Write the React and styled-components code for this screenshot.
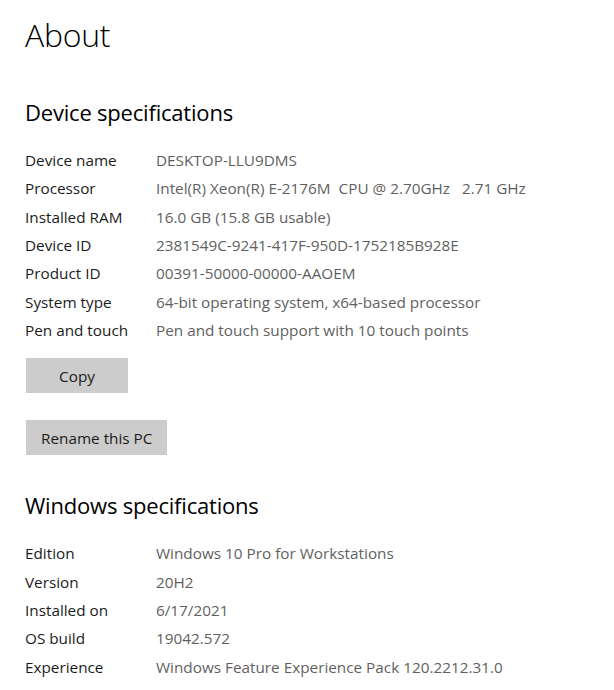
import React from "react";
import styled, { createGlobalStyle } from "styled-components";

const GlobalStyle = createGlobalStyle`
  body {
    margin: 0;
    background: #ffffff;
    font-family: "Open Sans", "Noto Sans", sans-serif;
    color: #000000;
  }
`;

const Page = styled.div`
  padding: 14px 0 30px 25px;
  display: flex;
  flex-direction: column;
  align-items: flex-start;
`;

const Title = styled.h1`
  margin: 0;
  font-size: 32px;
  font-weight: 300;
  line-height: 42px;
  letter-spacing: -0.3px;
`;

const SectionHeading = styled.h2`
  margin: ${(p) => p.$top}px 0 0;
  font-size: 22px;
  font-weight: 400;
  line-height: 32px;
  letter-spacing: -0.2px;
`;

const SpecList = styled.div`
  margin-top: ${(p) => p.$top}px;
  display: grid;
  grid-template-columns: 131px auto;
  grid-auto-rows: 28.33px;
  align-items: center;
  font-size: 15.3px;
`;

const Label = styled.div`
  color: #1b1b1b;
  white-space: nowrap;
`;

const Value = styled.div`
  color: #5f5f5f;
  white-space: pre;
`;

const Button = styled.button`
  margin-top: ${(p) => p.$top}px;
  margin-left: 1px;
  min-width: ${(p) => p.$width}px;
  height: 35px;
  padding: 0 15px;
  border: none;
  background: #cccccc;
  color: #1a1a1a;
  font-family: inherit;
  font-size: 15.3px;
`;

const device = [
  ["Device name", "DESKTOP-LLU9DMS"],
  ["Processor", "Intel(R) Xeon(R) E-2176M  CPU @ 2.70GHz   2.71 GHz"],
  ["Installed RAM", "16.0 GB (15.8 GB usable)"],
  ["Device ID", "2381549C-9241-417F-950D-1752185B928E"],
  ["Product ID", "00391-50000-00000-AAOEM"],
  ["System type", "64-bit operating system, x64-based processor"],
  ["Pen and touch", "Pen and touch support with 10 touch points"],
];

const windows = [
  ["Edition", "Windows 10 Pro for Workstations"],
  ["Version", "20H2"],
  ["Installed on", "6/17/2021"],
  ["OS build", "19042.572"],
  ["Experience", "Windows Feature Experience Pack 120.2212.31.0"],
];

const Specs = ({ rows, top }) => (
  <SpecList $top={top}>
    {rows.map(([k, v]) => (
      <React.Fragment key={k}>
        <Label>{k}</Label>
        <Value>{v}</Value>
      </React.Fragment>
    ))}
  </SpecList>
);

export default function App() {
  return (
    <>
      <GlobalStyle />
      <Page>
        <Title>About</Title>
        <SectionHeading $top={40}>Device specifications</SectionHeading>
        <Specs rows={device} top={18} />
        <Button $top={14} $width={102}>Copy</Button>
        <Button $top={27} $width={141}>Rename this PC</Button>
        <SectionHeading $top={34}>Windows specifications</SectionHeading>
        <Specs rows={windows} top={18} />
      </Page>
    </>
  );
}
